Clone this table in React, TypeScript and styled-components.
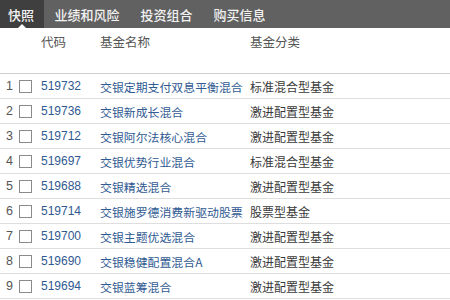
import React from "react";
import styled, { createGlobalStyle } from "styled-components";

const Global = createGlobalStyle`
  html, body { margin: 0; padding: 0; background: #fff; }
  body { width: 450px; height: 300px; overflow: hidden; font-family: "Liberation Sans", "Noto Sans CJK SC", sans-serif; }
`;

const Page = styled.div`
  width: 450px;
  display: flex;
  flex-direction: column;
`;

const TabBar = styled.div`
  height: 28px;
  background: #616161;
  display: flex;
  align-items: stretch;
`;

const Tab = styled.div<{ $active?: boolean }>`
  position: relative;
  display: flex;
  align-items: center;
  padding: 0 ${(p) => (p.$active ? "10px" : "10.5px")} 0 ${(p) => (p.$active ? "8px" : "10.5px")};
  background: ${(p) => (p.$active ? "#3f3f3f" : "transparent")};
  color: #f2f2f2;
  font-family: "Noto Sans CJK SC", sans-serif;
  font-size: 13px;
  font-weight: 500;
`;

const Notch = styled.span`
  position: absolute;
  left: 18px;
  bottom: 0;
  width: 0;
  height: 0;
  border-left: 4px solid transparent;
  border-right: 4px solid transparent;
  border-bottom: 4px solid #fff;
`;

const Grid = styled.div`
  display: grid;
  grid-template-columns: 16px 25px 59px 150px 1fr;
`;

const HeaderRow = styled(Grid)`
  height: 45px;
  border-bottom: 1px solid #cfcfcf;
  color: #555;
  font-family: "Noto Sans CJK SC", sans-serif;
  font-size: 12.5px;
`;

const HeadCell = styled.div`
  padding-top: 5px;
  line-height: 18px;
`;

const Row = styled(Grid)`
  height: 24px;
  border-bottom: 1px solid #dedede;
  align-items: center;
  font-size: 12px;
`;

const Num = styled.div`
  text-align: right;
  padding-right: 3px;
  color: #555;
  font-size: 12.5px;
`;

const CheckCell = styled.div`
  display: flex;
  align-items: center;
  padding-left: 3px;
`;

const Box = styled.span`
  display: inline-block;
  width: 11px;
  height: 11px;
  border: 1px solid #8a8a8a;
  background: #fff;
`;

const Code = styled.div`
  color: #2f5a92;
  font-size: 12px;
`;

const Name = styled.div`
  color: #2f5a92;
  font-family: "Noto Sans CJK SC", sans-serif;
  font-size: 11.9px;
  white-space: nowrap;
  overflow: hidden;
`;

const Cat = styled.div`
  color: #3a3a3a;
  font-family: "Noto Sans CJK SC", sans-serif;
  font-size: 12px;
`;

const tabs = ["快照", "业绩和风险", "投资组合", "购买信息"];

const rows = [
  ["519732", "交银定期支付双息平衡混合", "标准混合型基金"],
  ["519736", "交银新成长混合", "激进配置型基金"],
  ["519712", "交银阿尔法核心混合", "激进配置型基金"],
  ["519697", "交银优势行业混合", "标准混合型基金"],
  ["519688", "交银精选混合", "激进配置型基金"],
  ["519714", "交银施罗德消费新驱动股票", "股票型基金"],
  ["519700", "交银主题优选混合", "激进配置型基金"],
  ["519690", "交银稳健配置混合A", "激进配置型基金"],
  ["519694", "交银蓝筹混合", "激进配置型基金"],
];

export default function App() {
  return (
    <Page>
      <Global />
      <TabBar>
        {tabs.map((t, i) => (
          <Tab key={t} $active={i === 0}>
            {t}
            {i === 0 && <Notch />}
          </Tab>
        ))}
      </TabBar>
      <HeaderRow>
        <HeadCell />
        <HeadCell />
        <HeadCell>代码</HeadCell>
        <HeadCell>基金名称</HeadCell>
        <HeadCell>基金分类</HeadCell>
      </HeaderRow>
      {rows.map((r, i) => (
        <Row key={r[0]}>
          <Num>{i + 1}</Num>
          <CheckCell>
            <Box />
          </CheckCell>
          <Code>{r[0]}</Code>
          <Name>{r[1]}</Name>
          <Cat>{r[2]}</Cat>
        </Row>
      ))}
    </Page>
  );
}
